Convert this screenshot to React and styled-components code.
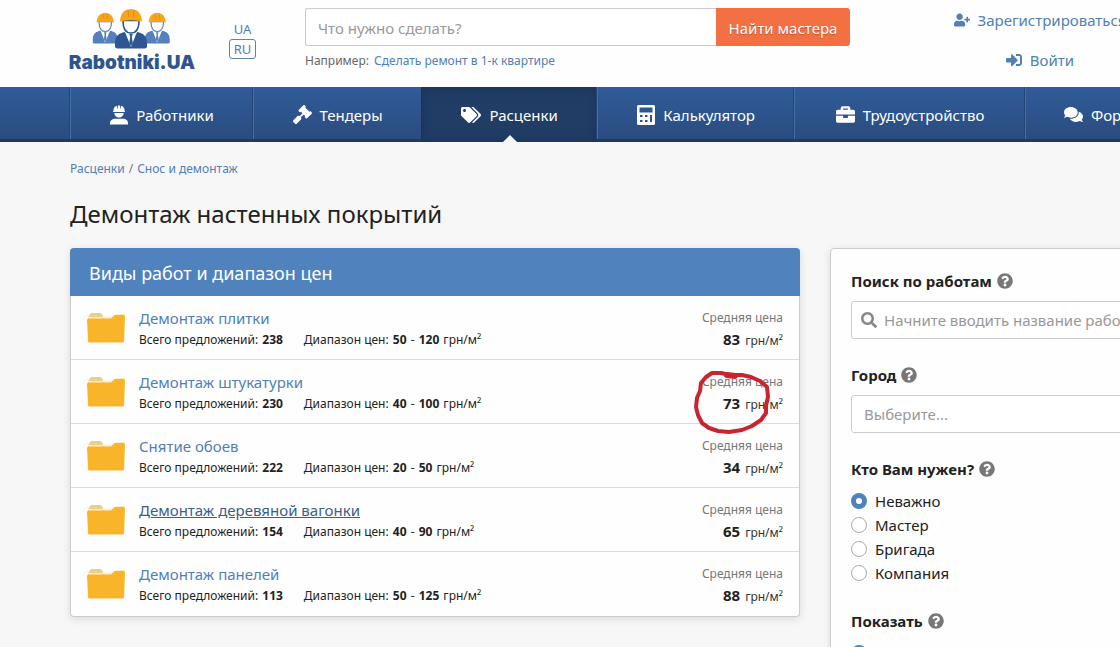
import styled, { createGlobalStyle } from 'styled-components';
import {
    FaBriefcase,
    FaComments,
    FaGavel,
    FaQuestionCircle,
    FaSearch,
    FaSignInAlt,
    FaTags,
    FaUserPlus,
} from 'react-icons/fa';

const GlobalStyle = createGlobalStyle`
    * {
        box-sizing: border-box;
    }

    body {
        margin: 0;
        overflow-x: hidden;
        background: #f7f7f7;
        color: #222;
        font-family: "Noto Sans", "Open Sans", sans-serif;
        font-size: 15px;
    }

    a {
        color: #5080b5;
        text-decoration: none;
    }

    input, select, button {
        font: inherit;
    }
`;

const Page = styled.div`
    min-width: 1240px;
`;

const Header = styled.header`
    display: flex;
    align-items: flex-start;
    height: 87px;
    padding: 8px 70px 0;
    background: #fefefe;
`;

const Logo = styled.a`
    display: flex;
    flex-direction: column;
    align-items: center;
    width: 124px;
    color: #2f5590;
    font-family: Inter, "Liberation Sans", sans-serif;
    font-size: 19px;
    font-weight: 900;
    line-height: 26px;
`;

const Languages = styled.div`
    display: flex;
    flex-direction: column;
    align-items: center;
    width: 27px;
    margin: 11px 49px 0 35px;
    font-size: 13px;
    line-height: 18px;
`;

const Language = styled.a`
    width: 100%;
    border: 1px solid ${(props) => (props.$active ? '#5b84b3' : 'transparent')};
    border-radius: 3px;
    text-align: center;
`;

const SearchBlock = styled.div`
    flex: 1;
`;

const SearchForm = styled.form`
    display: flex;
    height: 38px;
`;

const SearchInput = styled.input`
    flex: 1;
    min-width: 0;
    padding: 2px 12px 0;
    border: 1px solid #ccc;
    border-right: 0;
    border-radius: 3px 0 0 3px;
    background: #fff;

    &::placeholder {
        color: #999;
    }
`;

const SearchButton = styled.button`
    width: 134px;
    padding: 2px 0 0;
    border: 0;
    border-radius: 0 3px 3px 0;
    background: #f37043;
    color: #fff;
    text-shadow: 0 1px 1px rgba(0, 0, 0, 0.25);
    white-space: nowrap;
`;

const Example = styled.p`
    margin: 5px 0 0;
    color: #666;
    font-size: 12px;
    line-height: 20px;

    a {
        margin-left: 2px;
    }
`;

const UserLinks = styled.div`
    display: flex;
    flex-direction: column;
    align-items: center;
    gap: 18px;
    width: 320px;
    padding: 1px 0 0 60px;
    line-height: 22px;
`;

const UserLink = styled.a`
    display: flex;
    align-items: center;
    gap: 8px;
    white-space: nowrap;
`;

const Nav = styled.nav`
    display: flex;
    height: 55px;
    padding: 0 62px 0 70px;
    border-bottom: 3px solid #203a62;
    background: linear-gradient(#305c98, #2a4c80);
`;

const NavItem = styled.a`
    position: relative;
    display: flex;
    flex: ${(props) => props.$grow} 1 0;
    align-items: center;
    justify-content: center;
    gap: 8px;
    height: ${(props) => (props.$active ? '55px' : '52px')};
    padding-top: ${(props) => (props.$active ? '0' : '3px')};
    border-left: 1px solid ${(props) => (props.$active ? '#1b3358' : '#4470a8')};
    background: ${(props) => (props.$active ? '#213d66' : 'transparent')};
    box-shadow: ${(props) => (props.$active ? 'inset 0 0 12px #1b3459' : '-1px 0 #234576')};
    color: #fff;
    white-space: nowrap;

    &::after {
        content: "";
        display: ${(props) => (props.$active ? 'block' : 'none')};
        position: absolute;
        bottom: 0;
        border: 7px solid transparent;
        border-top: 0;
        border-bottom-color: #f7f7f7;
    }
`;

const Content = styled.main`
    padding: 16px 70px 30px;
`;

const Breadcrumbs = styled.nav`
    display: flex;
    gap: 4px;
    color: #777;
    font-size: 12px;
    line-height: 22px;
`;

const PageTitle = styled.h1`
    margin: 17px 0 18px;
    font-size: 24px;
    font-weight: 400;
    line-height: 33px;
`;

const Columns = styled.div`
    display: flex;
    align-items: flex-start;
    gap: 30px;
`;

const Panel = styled.section`
    flex: 1;
    border: 1px solid #ccc;
    border-top: 0;
    border-radius: 4px;
    background: #fefefe;
    box-shadow: 0 2px 8px rgba(0, 0, 0, 0.12);
`;

const PanelTitle = styled.h2`
    margin: 0 -1px;
    padding: 2px 19px 0;
    border-radius: 4px 4px 0 0;
    background: #5083be;
    color: #fff;
    font-size: 18px;
    font-weight: 400;
    line-height: 46px;
`;

const WorkList = styled.ul`
    margin: 0;
    padding: 0;
    list-style: none;
`;

const WorkRow = styled.li`
    display: flex;
    height: 64px;
    padding: 11px 16px 0;
    border-bottom: 1px solid #ddd;

    &:last-child {
        border-bottom: 0;
    }
`;

const FolderIcon = styled.svg`
    width: 38px;
    height: 30px;
    margin: 6px 14px 0 0;
`;

const WorkInfo = styled.div`
    flex: 1;
`;

const WorkLink = styled.a`
    display: inline-block;
    line-height: 22px;
    color: ${(props) => (props.$hovered ? '#3a6089' : '#5080b5')};
    text-decoration: ${(props) => (props.$hovered ? 'underline' : 'none')};
`;

const WorkMeta = styled.div`
    display: flex;
    gap: 20px;
    font-size: 12px;
    line-height: 22px;

    b {
        margin: 0 1px;
    }
`;

const Price = styled.div`
    position: relative;
    color: #777;
    font-size: 12px;
    line-height: 22px;
    text-align: right;
`;

const PriceValue = styled.div`
    color: #333;

    b {
        margin-right: 2px;
        color: #222;
        font-size: 15px;
        line-height: 20px;
    }
`;

const Marker = styled.svg`
    position: absolute;
    top: -2px;
    right: 11px;
    width: 80px;
    height: 68px;
`;

const Filters = styled.aside`
    display: flex;
    flex-direction: column;
    gap: 25px;
    width: 340px;
    padding: 21px 20px;
    border: 1px solid #ccc;
    border-radius: 4px;
    background: #fefefe;
    box-shadow: 0 2px 8px rgba(0, 0, 0, 0.12);
`;

const Field = styled.fieldset`
    min-width: 0;
    margin: 0;
    padding: 0;
    border: 0;
`;

const FieldLabel = styled.label`
    display: flex;
    align-items: center;
    gap: 5px;
    margin-bottom: 9px;
    padding: 0;
    font-weight: 700;
    line-height: 22px;

    svg {
        color: #777;
    }
`;

const InputBox = styled.div`
    display: flex;
    align-items: center;
    gap: 7px;
    height: 38px;
    padding: 0 9px;
    border: 1px solid #ccc;
    border-radius: 3px;
    background: #fff;
    color: #888;
`;

const FilterInput = styled.input`
    flex: 1;
    min-width: 0;
    padding: 0;
    border: 0;
    background: transparent;
    outline: 0;

    &::placeholder {
        color: #999;
    }
`;

const CitySelect = styled.select`
    appearance: none;
    width: 100%;
    height: 38px;
    padding: 0 12px;
    border: 1px solid #ccc;
    border-radius: 3px;
    background: #fff;
    color: #999;
`;

const RadioLabel = styled.label`
    display: flex;
    align-items: center;
    gap: 8px;
    line-height: 24px;
`;

const Radio = styled.input`
    appearance: none;
    width: 16px;
    height: 16px;
    margin: 0;
    border: 1px solid #aaa;
    border-radius: 50%;
    background: #fff;

    &:checked {
        border: 5px solid #5083be;
    }
`;

const navItems = [
    { title: 'Работники', icon: <WorkerIcon />, grow: 183 },
    { title: 'Тендеры', icon: <FaGavel size={19} />, grow: 168 },
    { title: 'Расценки', icon: <FaTags size={20} />, grow: 176, active: true },
    { title: 'Калькулятор', icon: <CalculatorIcon />, grow: 197 },
    { title: 'Трудоустройство', icon: <FaBriefcase size={19} />, grow: 231 },
    { title: 'Форум', icon: <FaComments size={19} />, grow: 153 },
];

const works = [
    { title: 'Демонтаж плитки', offers: 238, from: 50, to: 120, price: 83 },
    { title: 'Демонтаж штукатурки', offers: 230, from: 40, to: 100, price: 73, marked: true },
    { title: 'Снятие обоев', offers: 222, from: 20, to: 50, price: 34 },
    { title: 'Демонтаж деревяной вагонки', offers: 154, from: 40, to: 90, price: 65, hovered: true },
    { title: 'Демонтаж панелей', offers: 113, from: 50, to: 125, price: 88 },
];

const workerTypes = ['Неважно', 'Мастер', 'Бригада', 'Компания'];

function WorkerIcon() {
    return (
        <svg width="18" height="20" viewBox="0 0 18 20" fill="#fff" aria-hidden="true">
            <path d="M3.5 6V5.200C3.500 3 5 1.300 7 .8L7.500 3.500h.5V.4h2v3.100h.5L11 .8c2 .5 3.500 2.200 3.500 4.400V6z" />
            <path d="M3 6h12v1H3z" />
            <path d="M4.300 8h9.400c-.2 2.800-2 4.600-4.700 4.600S4.500 10.800 4.300 8z" />
            <path d="M0 19.500v-1.200c0-2.900 2.200-4.500 5.200-4.500h7.600c3 0 5.200 1.600 5.200 4.500v1.200z" />
        </svg>
    );
}

function CalculatorIcon() {
    return (
        <svg width="18" height="20" viewBox="0 0 18 20" aria-hidden="true">
            <path
                fill="#fff"
                fillRule="evenodd"
                d="M1.500 0h15A1.500 1.500 0 0 1 18 1.500v17a1.500 1.500 0 0 1-1.500 1.500h-15A1.500 1.500 0 0 1 0 18.500v-17A1.500 1.500 0 0 1 1.500 0zM2.500 2.500v5h13v-5zM3 10v2h2.500v-2zM8 10v2h2.500v-2zM3 15v2h2.500v-2zM8 15v2h2.500v-2zM13 10v7h2v-7z"
            />
        </svg>
    );
}

function LogoWorker({ x, y, scale, color }) {
    return (
        <g transform={`translate(${x} ${y}) scale(${scale})`}>
            <path d="M1 39V35c0-7 4-10 10-11l6 7 6-7c6 1 10 4 10 11v4q-1 1.500-3 1.500H4Q2 40.500 1 39z" fill={color} />
            <path d="M11 24l6 15 6-15z" fill="#fff" />
            <path d="M15.300 26h3.400l-.9 3 1 6-1.800 3-1.800-3 1-6z" fill={color} />
            <path d="M9 12.500c0 8 3 12.500 8 12.500s8-4.500 8-12.500z" fill="#fff" stroke={color} strokeWidth="1.500" />
            <path d="M6 13.500C6.500 6 9.500 2.500 14 1.500q3-1.200 6 0c4.500 1 7.500 4.500 8 12q-11-2.500-22 0z" fill="#f9a51a" />
            <path d="M14 2l.7 7M20 2l-.7 7" stroke="#df8d0f" fill="none" />
        </g>
    );
}

function SiteLogo() {
    return (
        <svg width="80" height="42" viewBox="0 0 80 42" aria-hidden="true">
            <LogoWorker x={0} y={4} scale={0.78} color="#5580bb" />
            <LogoWorker x={52} y={4} scale={0.78} color="#5580bb" />
            <LogoWorker x={22} y={0} scale={1} color="#2e5594" />
        </svg>
    );
}

function Folder() {
    return (
        <FolderIcon viewBox="0 0 38 30" aria-hidden="true">
            <path d="M4 0h10l2 3v3H1V4z" fill="#e5cf91" />
            <path d="M1 4h24l2-2h9v7H1z" fill="#f8edcf" />
            <path d="M0 7q0-1.500 1.500-1.500H24l3-3q.7-.7 2-.7h7.500q1.500 0 1.500 1.500L37 28q0 1.500-1.500 1.500H2.500Q1 29.500 1 28z" fill="#f9b52a" />
        </FolderIcon>
    );
}

function Work({ work }) {
    return (
        <WorkRow>
            <Folder />
            <WorkInfo>
                <WorkLink href="#" $hovered={work.hovered}>{work.title}</WorkLink>
                <WorkMeta>
                    <span>Всего предложений: <b>{work.offers}</b></span>
                    <span>Диапазон цен: <b>{work.from}</b> - <b>{work.to}</b> грн/м²</span>
                </WorkMeta>
            </WorkInfo>
            <Price>
                Средняя цена
                <PriceValue><b>{work.price}</b> грн/м²</PriceValue>
                {work.marked && (
                    <Marker viewBox="0 0 80 68" fill="none" stroke="#c9252f" strokeWidth="4" strokeLinecap="round" strokeLinejoin="round">
                        <path d="M38 6L29 4L20 4L14 8L9 14L8 22L5 29L4 38L6 46L10 54L17 59L26 62L37 63L50 61L60 57L69 51L74 44L74 36L76 28L75 18L68 12L59 8L50 6L42 6" />
                        <path d="M35 6l8 1" strokeWidth="6" />
                    </Marker>
                )}
            </Price>
        </WorkRow>
    );
}

export default function App() {
    return (
        <Page>
            <GlobalStyle />
            <Header>
                <Logo href="#">
                    <SiteLogo />
                    Rabotniki.UA
                </Logo>
                <Languages>
                    <Language href="#">UA</Language>
                    <Language href="#" $active>RU</Language>
                </Languages>
                <SearchBlock>
                    <SearchForm>
                        <SearchInput type="text" placeholder="Что нужно сделать?" aria-label="Что нужно сделать?" />
                        <SearchButton type="button">Найти мастера</SearchButton>
                    </SearchForm>
                    <Example>Например: <a href="#">Сделать ремонт в 1-к квартире</a></Example>
                </SearchBlock>
                <UserLinks>
                    <UserLink href="#"><FaUserPlus size={16} />Зарегистрироваться</UserLink>
                    <UserLink href="#"><FaSignInAlt size={16} />Войти</UserLink>
                </UserLinks>
            </Header>
            <Nav>
                {navItems.map((item) => (
                    <NavItem key={item.title} href="#" $grow={item.grow} $active={item.active}>
                        {item.icon}
                        {item.title}
                    </NavItem>
                ))}
            </Nav>
            <Content>
                <Breadcrumbs>
                    <a href="#">Расценки</a>
                    <span>/</span>
                    <a href="#">Снос и демонтаж</a>
                </Breadcrumbs>
                <PageTitle>Демонтаж настенных покрытий</PageTitle>
                <Columns>
                    <Panel>
                        <PanelTitle>Виды работ и диапазон цен</PanelTitle>
                        <WorkList>
                            {works.map((work) => <Work key={work.title} work={work} />)}
                        </WorkList>
                    </Panel>
                    <Filters>
                        <Field>
                            <FieldLabel htmlFor="work">Поиск по работам <FaQuestionCircle size={16} /></FieldLabel>
                            <InputBox>
                                <FaSearch size={16} />
                                <FilterInput id="work" type="text" placeholder="Начните вводить название работы" />
                            </InputBox>
                        </Field>
                        <Field>
                            <FieldLabel htmlFor="city">Город <FaQuestionCircle size={16} /></FieldLabel>
                            <CitySelect id="city">
                                <option>Выберите...</option>
                            </CitySelect>
                        </Field>
                        <Field>
                            <FieldLabel as="legend">Кто Вам нужен? <FaQuestionCircle size={16} /></FieldLabel>
                            {workerTypes.map((type, index) => (
                                <RadioLabel key={type}>
                                    <Radio type="radio" name="worker" defaultChecked={index === 0} />
                                    {type}
                                </RadioLabel>
                            ))}
                        </Field>
                        <Field>
                            <FieldLabel as="legend">Показать <FaQuestionCircle size={16} /></FieldLabel>
                            <RadioLabel>
                                <Radio type="radio" name="show" defaultChecked />
                                Все
                            </RadioLabel>
                        </Field>
                    </Filters>
                </Columns>
            </Content>
        </Page>
    );
}
